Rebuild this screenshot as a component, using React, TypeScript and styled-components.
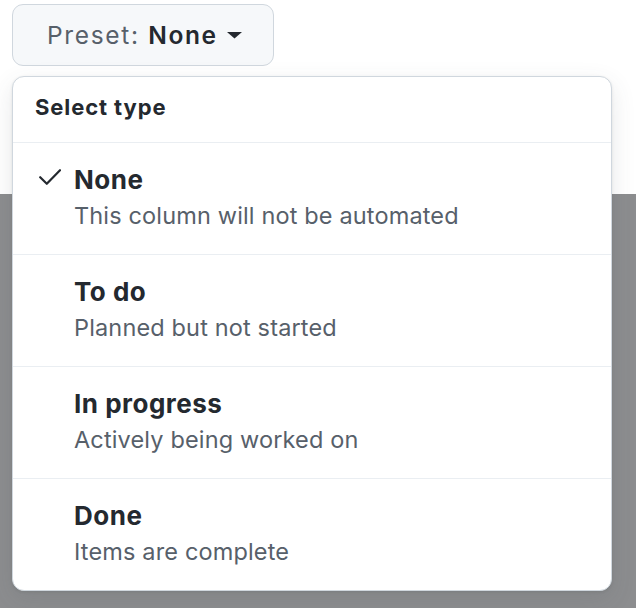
import React from 'react';
import styled, { createGlobalStyle } from 'styled-components';

const GlobalStyle = createGlobalStyle`
  html, body {
    margin: 0;
    padding: 0;
  }
  body {
    font-family: Inter, "Liberation Sans", sans-serif;
    -webkit-font-smoothing: antialiased;
  }
`;

const Page = styled.div`
  width: 636px;
  height: 608px;
  overflow: hidden;
  background: linear-gradient(to bottom, #ffffff 0, #ffffff 194px, #8c8d8f 194px);
  padding: 4px 0 0 12px;
  box-sizing: border-box;
  display: flex;
  flex-direction: column;
  align-items: flex-start;
  gap: 9.5px;
`;

const PresetButton = styled.button`
  display: inline-flex;
  align-items: center;
  gap: 9px;
  height: 62px;
  width: 262px;
  padding: 0 0 0 34px;
  box-sizing: border-box;
  border: 1.5px solid #d0d7de;
  border-radius: 11px;
  background: #f6f8fa;
  font-family: inherit;
  font-size: 24.5px;
  letter-spacing: 1.65px;
  color: #57606a;
  cursor: pointer;
`;

const ButtonValue = styled.span`
  color: #24292f;
  font-weight: 600;
`;

const Menu = styled.div`
  width: 600px;
  box-sizing: border-box;
  background: #ffffff;
  border: 1.5px solid #d0d7de;
  border-radius: 12px;
  box-shadow: 0 8px 24px rgba(66, 74, 83, 0.12), 0 1px 3px rgba(31, 35, 40, 0.1);
  overflow: hidden;
`;

const MenuHeader = styled.div`
  padding: 18.5px 21px 22.5px 22px;
  font-size: 22px;
  line-height: 24px;
  font-weight: 700;
  letter-spacing: 0.9px;
  color: #24292f;
  border-bottom: 1.5px solid #eaeef2;
`;

const Item = styled.div<{ $last?: boolean }>`
  display: flex;
  align-items: flex-start;
  gap: 13px;
  padding: 21.5px 24px 22px 26px;
  border-bottom: ${(p) => (p.$last ? 'none' : '1.5px solid #eaeef2')};
`;

const CheckSlot = styled.div`
  width: 22px;
  flex: none;
  padding-top: 4.5px;
  color: #24292f;
`;

const ItemText = styled.div`
  display: flex;
  flex-direction: column;
  gap: 3.5px;
`;

const ItemTitle = styled.div`
  font-size: 26px;
  line-height: 32px;
  font-weight: 700;
  letter-spacing: 0.5px;
  color: #24292f;
`;

const ItemDesc = styled.div`
  font-size: 23.5px;
  line-height: 32px;
  letter-spacing: 0.15px;
  color: #57606a;
`;

const Check = () => (
  <svg width="22" height="16" viewBox="0 0 22 16" fill="none">
    <path d="M1.2 8.2 L7.8 14.8 L21 1.2" stroke="currentColor" strokeWidth="2.2" strokeLinecap="round" strokeLinejoin="round" />
  </svg>
);

const Caret = () => (
  <svg width="15" height="7" viewBox="0 0 15 7">
    <path d="M0 0 L15 0 L7.5 6.5 Z" fill="#24292f" />
  </svg>
);

const options = [
  { title: 'None', desc: 'This column will not be automated' },
  { title: 'To do', desc: 'Planned but not started' },
  { title: 'In progress', desc: 'Actively being worked on' },
  { title: 'Done', desc: 'Items are complete' },
];

export default function App() {
  const selected = 'None';
  return (
    <>
      <GlobalStyle />
      <Page>
        <PresetButton>
          <span>
            Preset: <ButtonValue>{selected}</ButtonValue>
          </span>
          <Caret />
        </PresetButton>
        <Menu>
          <MenuHeader>Select type</MenuHeader>
          {options.map((o, i) => (
            <Item key={o.title} $last={i === options.length - 1}>
              <CheckSlot>{o.title === selected && <Check />}</CheckSlot>
              <ItemText>
                <ItemTitle>{o.title}</ItemTitle>
                <ItemDesc>{o.desc}</ItemDesc>
              </ItemText>
            </Item>
          ))}
        </Menu>
      </Page>
    </>
  );
}
